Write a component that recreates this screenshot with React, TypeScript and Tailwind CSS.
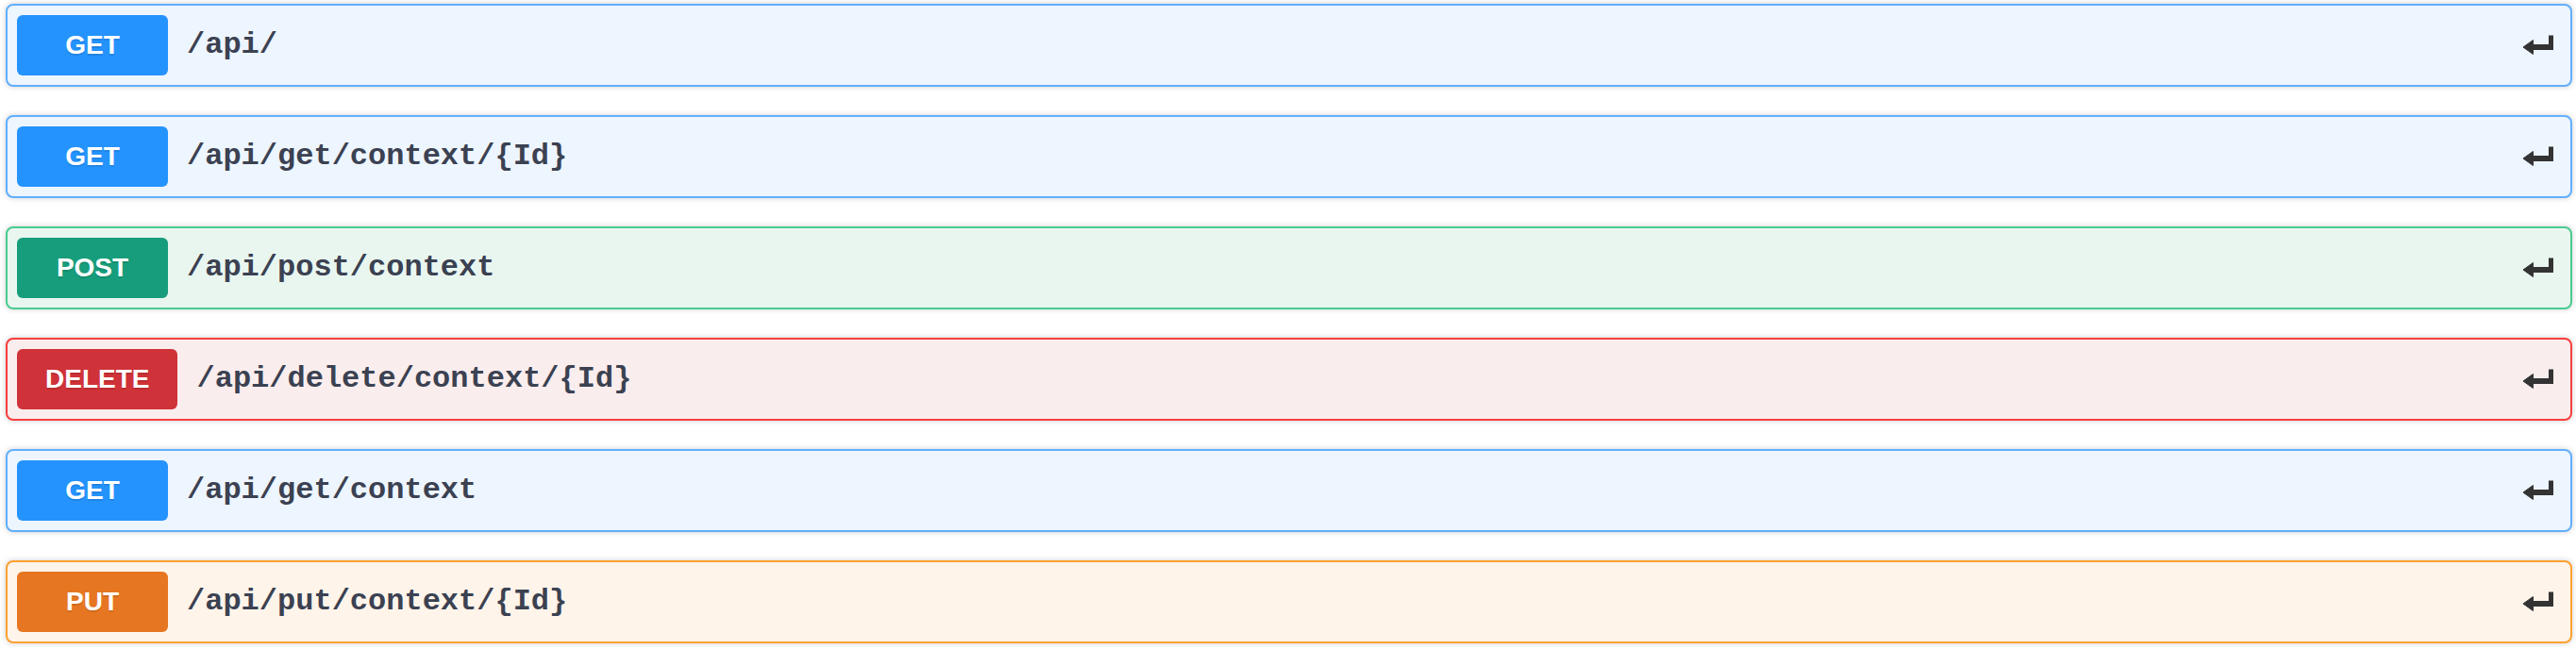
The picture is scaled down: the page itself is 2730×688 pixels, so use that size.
import React from "react";

type Op = {
  method: string;
  path: string;
  badge: string;
  border: string;
  bg: string;
};

const ops: Op[] = [
  { method: "GET", path: "/api/", badge: "bg-[#2493fd]", border: "border-[#61affe]", bg: "bg-[#edf5ff]" },
  { method: "GET", path: "/api/get/context/{Id}", badge: "bg-[#2493fd]", border: "border-[#61affe]", bg: "bg-[#edf5ff]" },
  { method: "POST", path: "/api/post/context", badge: "bg-[#179d7b]", border: "border-[#49cc90]", bg: "bg-[#e9f6f0]" },
  { method: "DELETE", path: "/api/delete/context/{Id}", badge: "bg-[#cf3238]", border: "border-[#f93e3e]", bg: "bg-[#faeded]" },
  { method: "GET", path: "/api/get/context", badge: "bg-[#2493fd]", border: "border-[#61affe]", bg: "bg-[#edf5ff]" },
  { method: "PUT", path: "/api/put/context/{Id}", badge: "bg-[#e67621]", border: "border-[#fca130]", bg: "bg-[#fff4ea]" },
];

function ReturnIcon() {
  return (
    <svg width="34" height="22" viewBox="0 0 34 22" className="block">
      <rect x="28" y="0.5" width="5" height="15.5" fill="#333333" />
      <rect x="10" y="10" width="23" height="6" fill="#333333" />
      <path d="M1 13 L11.5 5.5 L11.5 20.5 Z" fill="#333333" strokeLinejoin="round" stroke="#333333" strokeWidth="1" />
    </svg>
  );
}

export default function App() {
  return (
    <div className="bg-white w-[2730px] h-[688px] pl-[6px] pr-[4px] pt-[4px] flex flex-col gap-[30px]">
      {ops.map((op, i) => (
        <div
          key={i}
          className={`flex items-center h-[88px] border-2 rounded-[8px] p-[10px] shadow-[0_0_6px_rgba(0,0,0,0.19)] ${op.border} ${op.bg}`}
        >
          <div
            className={`h-[64px] min-w-[160px] px-[30px] rounded-[6px] flex items-center justify-center text-white font-bold text-[28px] [text-shadow:0_2px_0_rgba(0,0,0,0.1)] ${op.badge}`}
            style={{ fontFamily: '"Liberation Sans", Arial, sans-serif' }}
          >
            {op.method}
          </div>
          <div
            className="pl-[20px] flex-1 text-[32px] font-bold text-[#3b4151]"
            style={{ fontFamily: '"Liberation Mono", "Courier New", monospace' }}
          >
            {op.path}
          </div>
          <div className="pr-[7px]">
            <ReturnIcon />
          </div>
        </div>
      ))}
    </div>
  );
}
